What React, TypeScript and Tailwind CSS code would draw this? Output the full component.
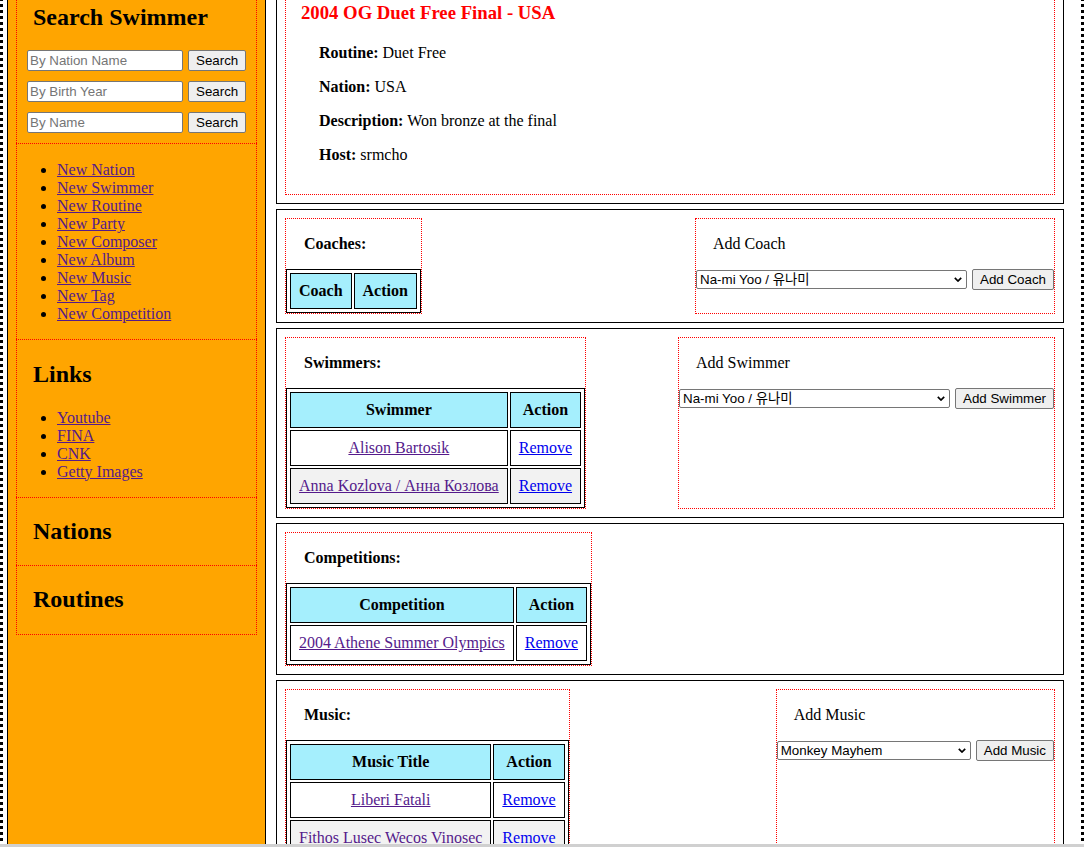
import React from 'react'

// swimmer routine detail page, sidebar + stacked boxes

const red = 'border border-dotted border-[#ff0000]'

const SearchRow = ({ placeholder }: { placeholder: string }) => (
  <div className="flex items-center gap-[5px]">
    <input
      placeholder={placeholder}
      className="h-[21px] w-[156px] rounded-[2px] border border-[#767676] bg-white px-[2px] text-[13.33px] text-black [font-family:'Liberation_Sans',sans-serif] placeholder:text-[#757575]"
    />
    <Btn>Search</Btn>
  </div>
)

const Btn = ({ children }: { children: React.ReactNode }) => (
  <button className="h-[21px] shrink-0 rounded-[2px] border border-[#767676] bg-[#efefef] px-[7px] text-[13.33px] leading-[15px] text-black [font-family:'Liberation_Sans',sans-serif]">
    {children}
  </button>
)

const Select = ({ value, wide }: { value: string; wide: boolean }) => (
  <div className={wide ? 'relative w-[271px]' : 'relative w-[194px]'}>
    <select className="block h-[19px] w-full appearance-none rounded-[2px] border border-[#767676] bg-white pl-[3px] text-[13.33px] leading-[17px] text-black [font-family:'Liberation_Sans','Noto_Sans_CJK_KR',sans-serif]">
      <option>{value}</option>
    </select>
    <svg className="pointer-events-none absolute right-[5px] top-[7px]" width="8" height="5" viewBox="0 0 8 5">
      <path d="M0.8 0.8L4 4L7.2 0.8" stroke="#000" strokeWidth="1.7" fill="none" />
    </svg>
  </div>
)

const DataTable = ({ head, rows }: { head: string; rows: string[] }) => (
  <table className="border-separate border-spacing-[2px] border border-black p-px text-center leading-[18px]">
    <thead>
      <tr>
        <th className="border border-black bg-[#a5effd] p-2 font-bold">{head}</th>
        <th className="border border-black bg-[#a5effd] p-2 font-bold">Action</th>
      </tr>
    </thead>
    <tbody>
      {rows.map((r, i) => (
        <tr key={r}>
          <td className={i % 2 ? 'border border-black bg-[#f2f2f2] p-2' : 'border border-black bg-white p-2'}>
            <a href="#" className="text-[#551a8b] underline">{r}</a>
          </td>
          <td className={i % 2 ? 'border border-black bg-[#f2f2f2] p-2' : 'border border-black bg-white p-2'}>
            <a href="#" className="text-[#0000ee] underline">Remove</a>
          </td>
        </tr>
      ))}
    </tbody>
  </table>
)

const ListCard = ({ title, head, rows }: { title: string; head: string; rows: string[] }) => (
  <div className={red}>
    <div className="px-[18px] py-4 font-bold leading-[18px]">{title}</div>
    <DataTable head={head} rows={rows} />
  </div>
)

const AddCard = ({ title, value, wide }: { title: string; value: string; wide: boolean }) => (
  <div className={red}>
    <div className="px-[17px] py-4 leading-[18px]">{title}</div>
    <div className="flex items-center gap-[5px]">
      <Select value={value} wide={wide} />
      <Btn>{title}</Btn>
    </div>
  </div>
)

const navLinks = ['New Nation', 'New Swimmer', 'New Routine', 'New Party', 'New Composer', 'New Album', 'New Music', 'New Tag', 'New Competition']
const extLinks = ['Youtube', 'FINA', 'CNK', 'Getty Images']

const Sidebar = () => (
  <aside className="w-[259px] shrink-0 border border-black bg-[#ffa500] p-2">
    <section className={`${red} flow-root border-b-0`}>
      <h2 className="mt-5 mb-[18.4px] pl-4 text-[24px] font-bold leading-[27.6px]">Search Swimmer</h2>
      <div className="flex flex-col gap-[10px] px-[10px] pb-[10px]">
        <SearchRow placeholder="By Nation Name" />
        <SearchRow placeholder="By Birth Year" />
        <SearchRow placeholder="By Name" />
      </div>
    </section>
    <section className={`${red} flow-root border-b-0`}>
      <ul className="mt-[17px] mb-4 list-disc pl-10 leading-[18px]">
        {navLinks.map((l) => (
          <li key={l}><a href="#" className="text-[#551a8b] underline">{l}</a></li>
        ))}
      </ul>
    </section>
    <section className={`${red} flow-root border-b-0`}>
      <h2 className="mt-[21px] mb-5 pl-4 text-[24px] font-bold leading-[27.6px]">Links</h2>
      <ul className="my-4 list-disc pl-10 leading-[18px]">
        {extLinks.map((l) => (
          <li key={l}><a href="#" className="text-[#551a8b] underline">{l}</a></li>
        ))}
      </ul>
    </section>
    <section className={`${red} flow-root border-b-0`}>
      <h2 className="my-5 pl-4 text-[24px] font-bold leading-[27.6px]">Nations</h2>
    </section>
    <section className={`${red} flow-root`}>
      <h2 className="my-5 pl-4 text-[24px] font-bold leading-[27.6px]">Routines</h2>
    </section>
  </aside>
)

const App = () => {
  return (
    <div className="relative h-screen overflow-hidden bg-white text-[16px] text-black [font-family:'Liberation_Serif','Noto_Sans_CJK_KR',serif]">
      <div className="-mt-[33px] flex gap-[10px] border-[3px] border-dotted border-black p-1 pr-[17px]">
        <Sidebar />

        <main className="flex flex-1 flex-col gap-[5px]">
          <div className="border border-black p-2">
            <div className={`${red} pt-[18px] pb-[30px] pl-[15px]`}>
              <h3 className="mb-[20px] text-[18.72px] font-bold leading-[22px] text-[#ff0000]">2004 OG Duet Free Final - USA</h3>
              <div className="flex flex-col gap-4 pl-[18px] leading-[18px]">
                <p><b>Routine:</b> Duet Free</p>
                <p><b>Nation:</b> USA</p>
                <p><b>Description:</b> Won bronze at the final</p>
                <p><b>Host:</b> srmcho</p>
              </div>
            </div>
          </div>

          <div className="flex justify-between border border-black p-2">
            <ListCard title="Coaches:" head="Coach" rows={[]} />
            <AddCard title="Add Coach" value="Na-mi Yoo / 유나미" wide />
          </div>

          <div className="flex justify-between border border-black p-2">
            <ListCard title="Swimmers:" head="Swimmer" rows={['Alison Bartosik', 'Anna Kozlova / Анна Козлова']} />
            <AddCard title="Add Swimmer" value="Na-mi Yoo / 유나미" wide />
          </div>

          <div className="flex justify-between border border-black p-2">
            <ListCard title="Competitions:" head="Competition" rows={['2004 Athene Summer Olympics']} />
          </div>

          <div className="flex justify-between border border-black p-2">
            <ListCard title="Music:" head="Music Title" rows={['Liberi Fatali', 'Fithos Lusec Wecos Vinosec', 'Force Your Way']} />
            <AddCard title="Add Music" value="Monkey Mayhem" wide={false} />
          </div>
        </main>
      </div>

      <div className="absolute bottom-0 left-0 h-[3px] w-full bg-[#d0d0d0]" />
    </div>
  )
}

export default App
